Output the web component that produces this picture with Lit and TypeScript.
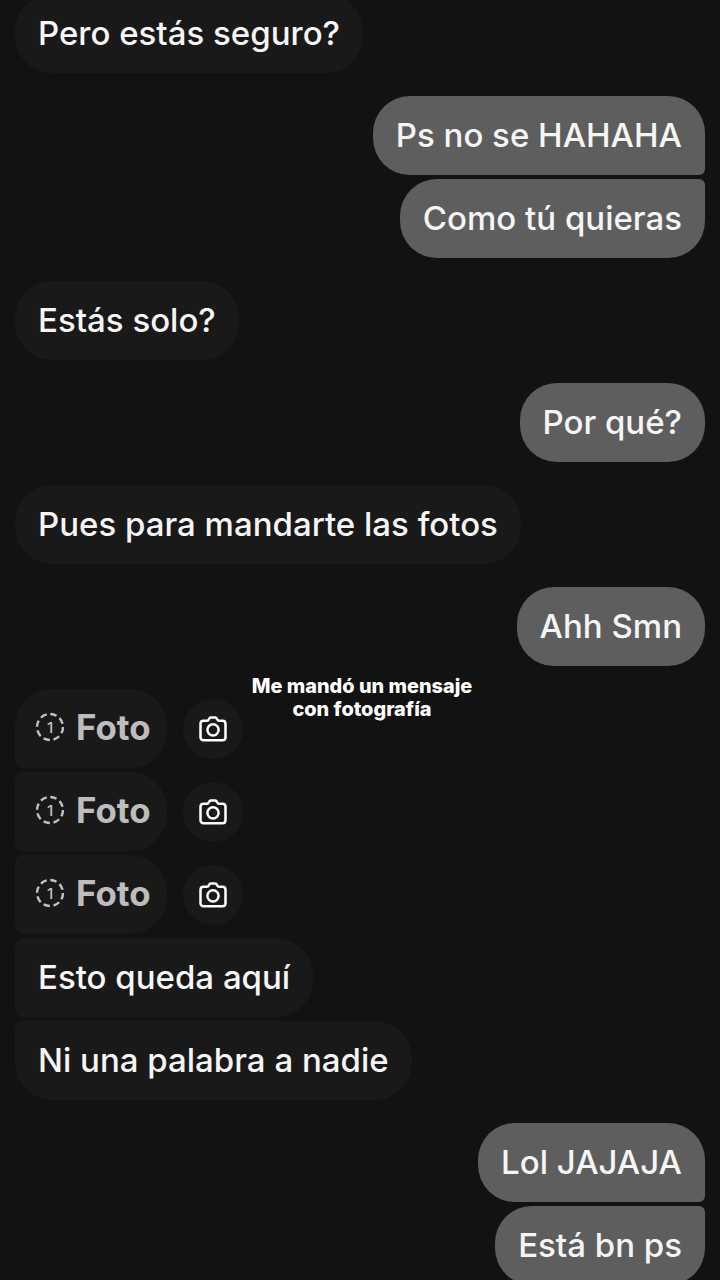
import { LitElement, html, css } from "lit";
import { customElement } from "lit/decorators.js";

const cam = html`<svg width="30" height="30" viewBox="0 0 30 30" fill="none" stroke="#fff" stroke-width="2.500" stroke-linejoin="round"><path d="M5.500 6.800h3.600c.7 0 1.200-.4 1.500-1l.6-1.200c.3-.6.8-1 1.500-1h4.600c.7 0 1.200.4 1.500 1l.6 1.200c.3.6.8 1 1.500 1h3.600c1.800 0 3 1.300 3 3v13.400c0 1.800-1.200 3-3 3H5.500c-1.800 0-3-1.200-3-3V9.800c0-1.700 1.200-3 3-3z"/><circle cx="15" cy="15.800" r="5.600"/></svg>`;
const once = html`<svg width="30" height="30" viewBox="0 0 30 30" fill="none"><circle cx="15" cy="15" r="13" stroke="#c2c2c2" stroke-width="2.400" stroke-dasharray="6.500 3.700"/><text x="15" y="20.500" text-anchor="middle" font-family="Inter, sans-serif" font-size="15" font-weight="500" fill="#c2c2c2">1</text></svg>`;

type Msg = { t: string; me?: boolean; foto?: boolean; gap: number };
const msgs: Msg[] = [
  { t: "Pero estás seguro?", gap: 0 },
  { t: "Ps no se HAHAHA", me: true, gap: 23 },
  { t: "Como tú quieras", me: true, gap: 4 },
  { t: "Estás solo?", gap: 23 },
  { t: "Por qué?", me: true, gap: 23 },
  { t: "Pues para mandarte las fotos", gap: 23 },
  { t: "Ahh Smn", me: true, gap: 23 },
  { t: "Foto", foto: true, gap: 23 },
  { t: "Foto", foto: true, gap: 4 },
  { t: "Foto", foto: true, gap: 4 },
  { t: "Esto queda aquí", gap: 4 },
  { t: "Ni una palabra a nadie", gap: 4 },
  { t: "Lol JAJAJA", me: true, gap: 23 },
  { t: "Está bn ps", me: true, gap: 4 },
];

@customElement("app-root")
export class AppRoot extends LitElement {
  static styles = css`
    :host { display: block; width: 720px; height: 1280px; background: #121212; overflow: hidden; position: relative; font-family: Inter, "Liberation Sans", sans-serif; }
    .list { display: flex; flex-direction: column; padding: 0 15px; margin-top: -6px; }
    .row { display: flex; align-items: center; gap: 16px; }
    .row.me { justify-content: flex-end; }
    .bubble { height: 79px; box-sizing: border-box; padding: 0 23px 2px; display: flex; align-items: center; border-radius: 37px; background: #191919; color: #f5f5f5; font-size: 33px; font-weight: 500; white-space: nowrap; }
    .me .bubble { background: #5e5e5e; }
    .first .bubble { border-bottom-right-radius: 6px; }
    .next .bubble { border-top-right-radius: 6px; }
    .lfirst .bubble { border-bottom-left-radius: 8px; }
    .lnext .bubble { border-top-left-radius: 8px; }
    .foto .bubble { padding: 0 16px 4px 20px; gap: 11px; color: #bdbdbd; font-weight: 700; font-size: 34.800px; }
    .cam { width: 60px; height: 60px; border-radius: 50%; background: #191919; display: flex; align-items: center; justify-content: center; }
    .note { position: absolute; left: 222px; width: 280px; top: 675px; text-align: center; color: #fff; font-size: 19.900px; line-height: 23px; font-weight: 800; }
  `;
  render() {
    return html`<div class="list">
      ${msgs.map((m, i) => {
        const next = msgs[i + 1];
        const linkedNext = !!next && next.gap === 4;
        const linkedPrev = m.gap === 4;
        const cls = ["row", m.me ? "me" : "", m.foto ? "foto" : "",
          m.me && linkedNext ? "first" : "",
          m.me && linkedPrev ? "next" : "",
          !m.me && linkedNext ? "lfirst" : "",
          !m.me && linkedPrev ? "lnext" : ""].join(" ");
        return html`<div class=${cls} style="margin-top:${m.gap}px">
          <div class="bubble">${m.foto ? once : ""}<span>${m.t}</span></div>
          ${m.foto ? html`<div class="cam">${cam}</div>` : ""}
        </div>`;
      })}
    </div>
    <div class="note">Me mandó un mensaje<br />con fotografía</div>`;
  }
}
